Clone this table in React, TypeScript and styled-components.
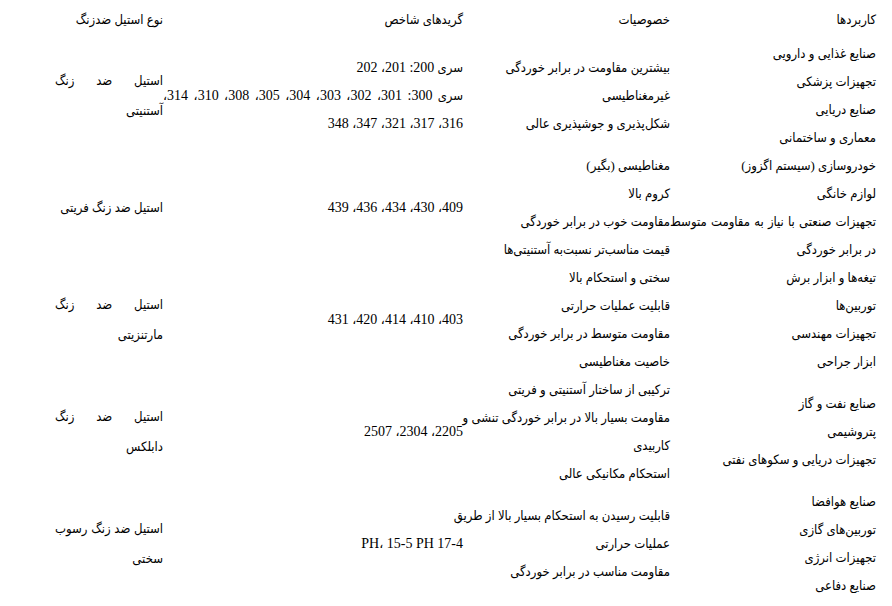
import { Fragment } from 'react';
import styled, { createGlobalStyle } from 'styled-components';

const GlobalStyle = createGlobalStyle`
    body {
        margin: 0;
        background: #ffffff;
    }
`;

type Grade = { series?: string; numbers: string };

// a string wraps by itself, an array is a paragraph with fixed line breaks
type Item = string | string[];

type SteelRow = {
    id: string;
    applications: Item[];
    properties: Item[];
    grades: Grade[];
    type: string;
};

const rows: SteelRow[] = [
    {
        id: 'austenitic',
        applications: ['صنایع غذایی و دارویی', 'تجهیزات پزشکی', 'صنایع دریایی', 'معماری و ساختمانی'],
        properties: ['بیشترین مقاومت در برابر خوردگی', 'غیرمغناطیسی', 'شکل‌پذیری و جوشپذیری عالی'],
        grades: [
            { series: 'سری', numbers: '200: 201، 202' },
            { series: 'سری', numbers: '300: 301، 302، 303، 304، 305، 308، 310، 314، 316، 317، 321، 347، 348' },
        ],
        type: 'استیل ضد زنگ آستنیتی',
    },
    {
        id: 'ferritic',
        applications: ['خودروسازی (سیستم اگزوز)', 'لوازم خانگی', 'تجهیزات صنعتی با نیاز به مقاومت متوسط در برابر خوردگی'],
        properties: ['مغناطیسی (بگیر)', 'کروم بالا', 'مقاومت خوب در برابر خوردگی', 'قیمت مناسب‌تر نسبت‌به آستنیتی‌ها'],
        grades: [{ numbers: '409، 430، 434، 436، 439' }],
        type: 'استیل ضد زنگ فریتی',
    },
    {
        id: 'martensitic',
        applications: ['تیغه‌ها و ابزار برش', 'توربین‌ها', 'تجهیزات مهندسی', 'ابزار جراحی'],
        properties: ['سختی و استحکام بالا', 'قابلیت عملیات حرارتی', 'مقاومت متوسط در برابر خوردگی', 'خاصیت مغناطیسی'],
        grades: [{ numbers: '403، 410، 414، 420، 431' }],
        type: 'استیل ضد زنگ مارتنزیتی',
    },
    {
        id: 'duplex',
        applications: ['صنایع نفت و گاز', 'پتروشیمی', 'تجهیزات دریایی و سکوهای نفتی'],
        properties: [
            'ترکیبی از ساختار آستنیتی و فریتی',
            ['مقاومت بسیار بالا در برابر خوردگی تنشی و', 'کاربیدی'],
            'استحکام مکانیکی عالی',
        ],
        grades: [{ numbers: '2205، 2304، 2507' }],
        type: 'استیل ضد زنگ دابلکس',
    },
    {
        id: 'ph',
        applications: ['صنایع هوافضا', 'توربین‌های گازی', 'تجهیزات انرژی', 'صنایع دفاعی'],
        properties: [['قابلیت رسیدن به استحکام بسیار بالا از طریق', 'عملیات حرارتی'], 'مقاومت مناسب در برابر خوردگی'],
        grades: [{ numbers: '17-4 PH، 15-5 PH' }],
        type: 'استیل ضد زنگ رسوب سختی',
    },
];

const ItemLine = ({ item }: { item: Item }) =>
    Array.isArray(item) ? (
        <Line $nowrap>
            {item.map((part, i) => (
                <Fragment key={part}>
                    {i > 0 && <br />}
                    {part}
                </Fragment>
            ))}
        </Line>
    ) : (
        <Line>{item}</Line>
    );

const itemKey = (item: Item) => (Array.isArray(item) ? item.join(' ') : item);

export default function App() {
    return (
        <>
            <GlobalStyle />
            <Page>
                <Row height={40}>
                    <Cell>کاربردها</Cell>
                    <Cell>خصوصیات</Cell>
                    <Cell>گریدهای شاخص</Cell>
                    <Cell>نوع استیل ضدزنگ</Cell>
                </Row>
                {rows.map((row) => (
                    <Row key={row.id} height={112}>
                        <Cell>
                            {row.applications.map((item) => (
                                <ItemLine key={itemKey(item)} item={item} />
                            ))}
                        </Cell>
                        <Cell>
                            {row.properties.map((item) => (
                                <ItemLine key={itemKey(item)} item={item} />
                            ))}
                        </Cell>
                        <Cell>
                            {row.grades.map((grade) => (
                                <GradeLine key={grade.numbers}>
                                    {grade.series && <Series>{grade.series} </Series>}
                                    {grade.numbers}
                                </GradeLine>
                            ))}
                        </Cell>
                        <Cell>
                            <TypeName>{row.type}</TypeName>
                        </Cell>
                    </Row>
                ))}
            </Page>
        </>
    );
}

const Page = styled.div`
    direction: rtl;
    padding: 0 16px 0 0;
    font-family: 'Liberation Serif', 'DejaVu Sans Condensed', 'DejaVu Sans', serif;
    font-size: 13px;
    color: #000000;
`;

const Row = styled.div<{ height: number }>`
    display: grid;
    grid-template-columns: 206px 207px 300px 108px;
    align-items: center;
    height: ${(p) => p.height}px;
`;

const Cell = styled.div`
    display: flex;
    flex-direction: column;
    text-align: justify;
`;

const Line = styled.div<{ $nowrap?: boolean }>`
    line-height: 28px;
    white-space: ${(p) => (p.$nowrap ? 'nowrap' : 'normal')};
`;

const GradeLine = styled.div`
    font-size: 14px;
    line-height: 28px;
`;

const Series = styled.span`
    font-size: 13px;
`;

const TypeName = styled.div`
    line-height: 30px;
`;
